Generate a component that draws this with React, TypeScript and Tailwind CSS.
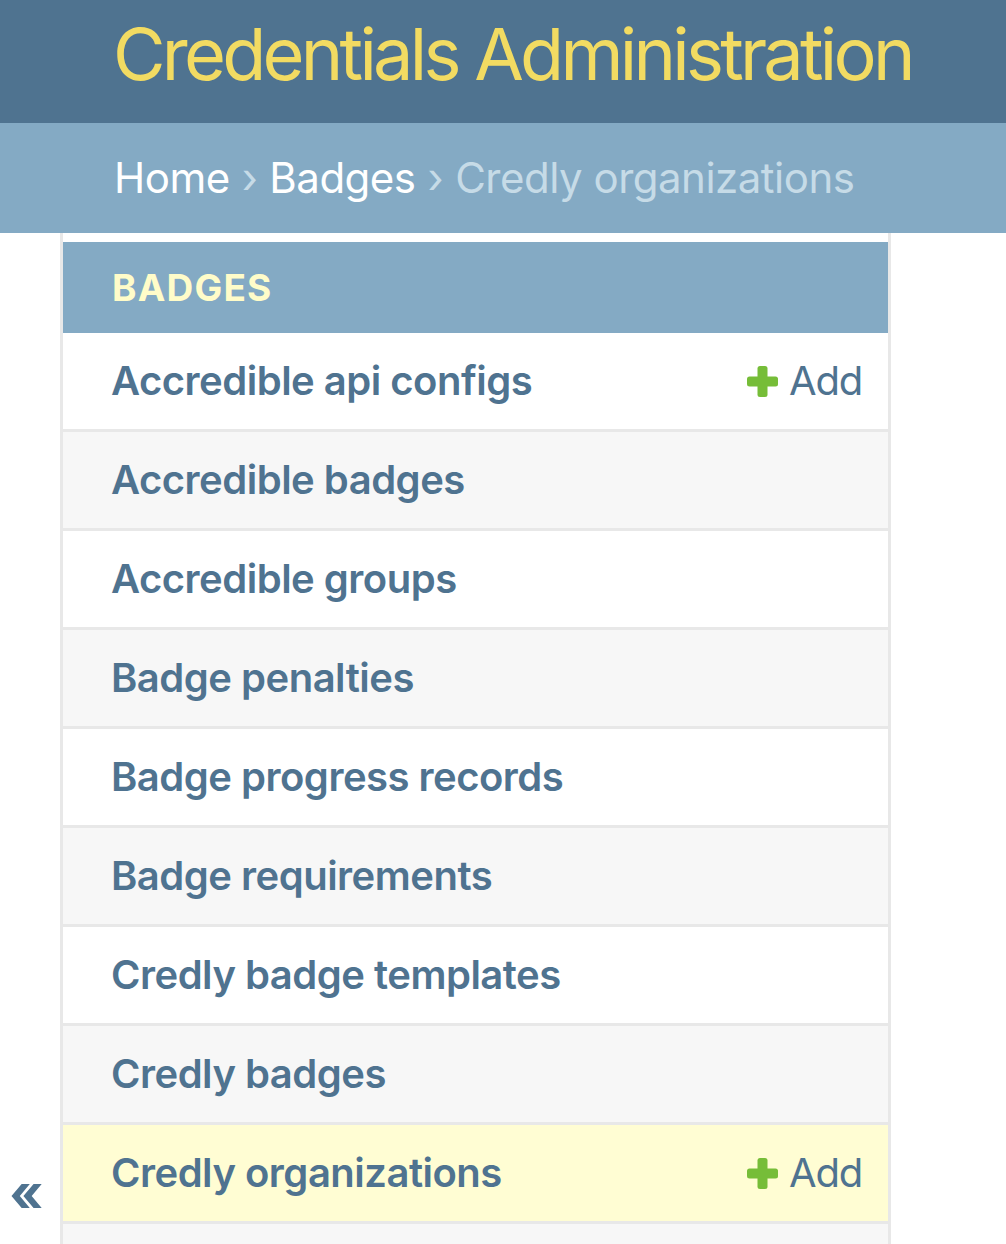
const models = [
  { name: "Accredible api configs", add: true },
  { name: "Accredible badges" },
  { name: "Accredible groups" },
  { name: "Badge penalties" },
  { name: "Badge progress records" },
  { name: "Badge requirements" },
  { name: "Credly badge templates" },
  { name: "Credly badges" },
  { name: "Credly organizations", add: true, current: true },
  { name: "" },
];

function AddIcon() {
  return (
    <svg viewBox="0 0 31 31" className="w-[31px] h-[31px]" fill="#76bd38">
      <rect x="0" y="10.5" width="31" height="10" rx="2.5" />
      <rect x="10.5" y="0" width="10" height="31" rx="2.5" />
    </svg>
  );
}

export default function App() {
  return (
    <div className="h-[1244px] overflow-hidden bg-white font-['Inter',sans-serif]">
      {/* HEADER */}
      <header className="h-[123px] bg-[#4f7390] flex items-center pl-[113px]">
        <h1 className="text-[72px] leading-none font-normal whitespace-nowrap tracking-[-3.75px] text-[#f2db62] pb-[16px]">
          Credentials Administration
        </h1>
      </header>

      {/* BREADCRUMBS */}
      <div className="h-[110px] bg-[#84aac4] flex items-center pl-[114px] text-[42px] tracking-[-0.5px] text-white pb-[2px] whitespace-nowrap">
        <span>Home</span>
        <span className="text-[#c6dbe7] mx-[12px]">›</span>
        <span>Badges</span>
        <span className="text-[#c6dbe7] mx-[12px]">›</span>
        <span className="text-[#c6dbe7]">Credly organizations</span>
      </div>

      <div className="flex">
        {/* SIDEBAR TOGGLE */}
        <div className="w-[63px] shrink-0 border-r-[3px] border-[#e8e8e8] h-[1011px] pt-[935px] flex justify-center">
          <span className="text-[52px] font-bold leading-none text-[#4f7390] pr-[7px]">«</span>
        </div>

        {/* NAV SIDEBAR */}
        <nav className="w-[828px] shrink-0 border-r-[3px] border-[#e8e8e8] pt-[9px]">
          <div className="h-[91px] bg-[#84aac4] flex items-center pl-[49px]">
            <span className="text-[37px] font-bold tracking-[1.2px] text-[#fffcc9]">BADGES</span>
          </div>
          {models.map((m, i) => (
            <div
              key={i}
              className={
                "h-[99px] border-b-[3px] border-[#e8e8e8] flex items-center justify-between pl-[48px] pr-[26px] " +
                (m.current ? "bg-[#fffdd3]" : i % 2 === 1 ? "bg-[#f7f7f7]" : "bg-white")
              }
            >
              <span className="text-[40px] font-semibold tracking-[-0.5px] text-[#4f7390] whitespace-nowrap">{m.name}</span>
              {m.add && (
                <span className="flex items-center gap-[11px] text-[40px] tracking-[-1.2px] text-[#4f7390]">
                  <AddIcon />
                  Add
                </span>
              )}
            </div>
          ))}
        </nav>
      </div>
    </div>
  );
}
